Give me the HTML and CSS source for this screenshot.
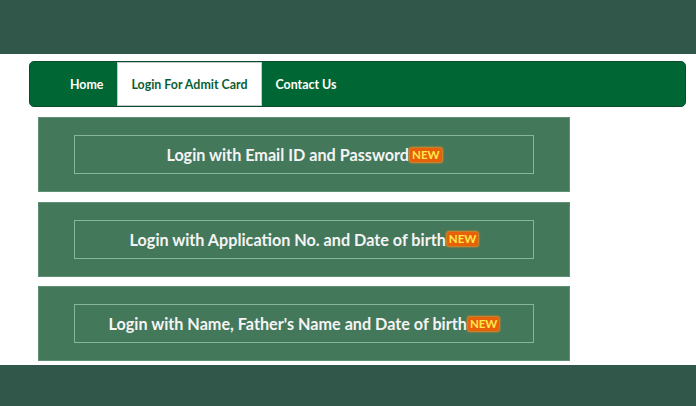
FILE: index.html
```html
<!DOCTYPE html>
<html>
<head>
<meta charset="utf-8">
<link rel="stylesheet" href="styles.css">
</head>
<body>
<header class="topbar"></header>
<nav class="nav">
  <ul class="menu">
    <li class="item"><a href="#">Home</a></li>
    <li class="item active"><a href="#">Login For Admit Card</a></li>
    <li class="item"><a href="#">Contact Us</a></li>
  </ul>
</nav>
<main class="cards">
  <div class="card"><a class="inner" href="#"><span class="label">Login with Email ID and Password</span><span class="new">NEW</span></a></div>
  <div class="card"><a class="inner" href="#"><span class="label">Login with Application No. and Date of birth</span><span class="new">NEW</span></a></div>
  <div class="card"><a class="inner" href="#"><span class="label">Login with Name, Father's Name and Date of birth</span><span class="new">NEW</span></a></div>
</main>
<footer class="footer"></footer>
</body>
</html>
```
FILE: styles.css
```css
html, body {
  margin: 0;
  padding: 0;
  background: #ffffff;
  font-family: Lato, "Open Sans", sans-serif;
}
.topbar {
  height: 54px;
  background: #31574a;
}
.nav {
  margin: 7px 10px 0 29px;
  height: 46px;
  background: #006633;
  border-radius: 5px;
  box-sizing: border-box;
  border: 1px solid #0c4a2b;
}
.menu {
  list-style: none;
  margin: 0;
  padding: 0 0 0 26px;
  display: flex;
  height: 100%;
}
.item { height: 100%; }
.item a {
  display: flex;
  align-items: center;
  height: 100%;
  padding: 0 14px;
  color: #ffffff;
  font-weight: 700;
  font-size: 12.4px;
  text-decoration: none;
}
.item.active a {
  background: #ffffff;
  color: #0b5e33;
  box-shadow: inset 0 0 0 1px #c9c9c9;
}
.cards {
  margin: 10px 0 0 38px;
  width: 532px;
  display: flex;
  flex-direction: column;
  gap: 9.5px;
}
.card {
  height: 75px;
  box-sizing: border-box;
  background: #44785b;
  border: 1px solid #5f8f74;
  padding: 17px 35px;
}
.inner {
  display: flex;
  align-items: center;
  justify-content: center;
  height: 100%;
  box-sizing: border-box;
  border: 1px solid #86b59a;
  text-decoration: none;
  color: #f4f4f4;
  font-weight: 700;
  font-size: 16.2px;
}
.new {
  display: inline-block;
  background: #e8600a;
  color: #ffe94a;
  font-size: 11.5px;
  font-weight: 700;
  line-height: 14px;
  padding: 0 2px;
  border-radius: 2px;
  box-shadow: 0 0 2px 1px #f08a1e;
  margin-left: 1px;
}
.footer {
  margin-top: 4px;
  height: 41px;
  background: #31574a;
}
```
